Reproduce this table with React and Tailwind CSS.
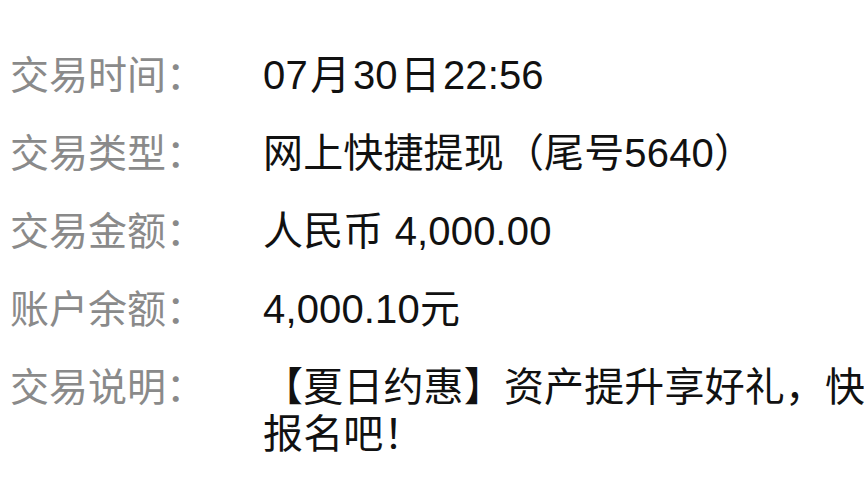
import React from "react";

const rows = [
  {
    label: "交易时间：",
    value: (
      <>
        07<span className="mx-[2.5px]">月</span>30<span className="mx-[2.5px]">日</span>22:56
      </>
    ),
  },
  { label: "交易类型：", value: "网上快捷提现（尾号5640）" },
  { label: "交易金额：", value: "人民币 4,000.00" },
  { label: "账户余额：", value: "4,000.10元" },
  { label: "交易说明：", value: "【夏日约惠】资产提升享好礼，快速报名吧！" },
];

const App = () => {
  return (
    <div
      className="w-[864px] h-[486px] overflow-hidden bg-white pt-[52px] pl-[10px]"
      style={{ fontFamily: '"Liberation Sans", "Noto Sans CJK SC", sans-serif' }}
    >
      <div className="flex flex-col gap-[31px]">
        {rows.map((row, i) => (
          <div key={i} className="flex text-[40px] leading-[47px]">
            <div className="w-[253px] shrink-0 text-[#8a8a8a] text-[39px]">{row.label}</div>
            <div className="w-[650px] shrink-0 text-[#111111] tracking-[0.15px]">{row.value}</div>
          </div>
        ))}
      </div>
    </div>
  );
};

export default App;
